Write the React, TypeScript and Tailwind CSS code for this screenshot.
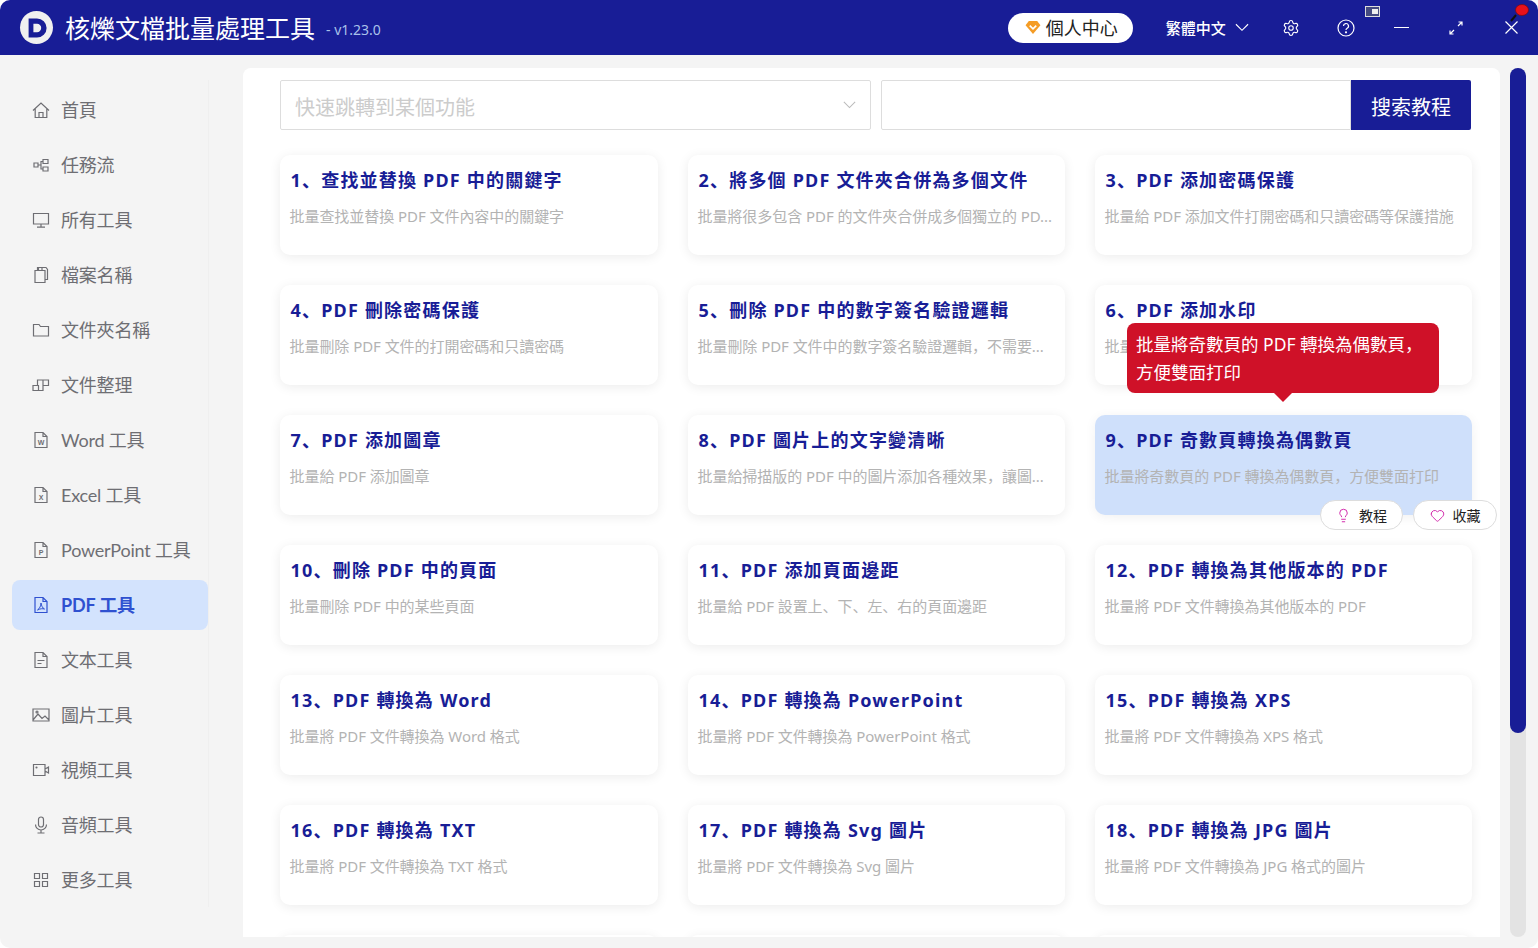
import { Heart, Lightbulb, Settings } from 'lucide-react';
import type { ReactNode } from 'react';

const FONT = 'font-["Noto_Sans","Noto_Sans_CJK_SC",sans-serif]';

function Ico({ children }: { children: ReactNode }) {
  return (
    <svg viewBox="0 0 18 18" fill="none" stroke="currentColor" strokeWidth="1.2" className="size-[18px] shrink-0">
      {children}
    </svg>
  );
}

function DocIco({ children }: { children?: ReactNode }) {
  return (
    <Ico>
      <path d="M3 1.5H11L15 5.5V16.5H3Z M11 1.5V5.5H15" />
      {children}
    </Ico>
  );
}

function Letter({ c }: { c: string }) {
  return (
    <text x="9" y="13.5" textAnchor="middle" fontSize="7" fontWeight="700" fill="currentColor" stroke="none" fontFamily="Liberation Sans">
      {c}
    </text>
  );
}

function Chevron({ className }: { className: string }) {
  return (
    <svg viewBox="0 0 15 9" fill="none" stroke="currentColor" strokeWidth="1.2" className={className}>
      <path d="M1 1l6.500 6.500L14 1" />
    </svg>
  );
}

const NAV: { label: string; icon: ReactNode; active?: boolean }[] = [
  { label: '首頁', icon: <Ico><path d="M1 9.500 9 2l8 7.500M3.200 8v8.500h11.600V8M7 16.500v-5h4v5" /></Ico> },
  { label: '任務流', icon: <Ico><path d="M2 7h4v4H2zM11 3.500h5v4h-5zM11 11h5v4h-5zM6 9h3V5.500h2M9 9v4h2" /></Ico> },
  { label: '所有工具', icon: <Ico><path d="M1.500 2.500h15v10.500h-15zM9 13v3M5 16.200h8" /></Ico> },
  { label: '檔案名稱', icon: <Ico><path d="M3 4.500h10v12H3zM5.500 4.500V1.500h8.500l1.500 2v10H13M6.500 1.500v3M10 1.500v3" /></Ico> },
  { label: '文件夾名稱', icon: <Ico><path d="M1.500 3.500H7l1.500 2h8v9.500h-15Z" /></Ico> },
  { label: '文件整理', icon: <Ico><path d="M1 9.500h5.500v5H1zM6.500 9.500v5H11V9.500M5.500 9.500V4h11v5.500H11M11 4v5.500" /></Ico> },
  { label: 'Word 工具', icon: <DocIco><Letter c="W" /></DocIco> },
  { label: 'Excel 工具', icon: <DocIco><Letter c="X" /></DocIco> },
  { label: 'PowerPoint 工具', icon: <DocIco><Letter c="P" /></DocIco> },
  { label: 'PDF 工具', active: true, icon: <DocIco><path d="M9 7c0 3-1.500 5.500-3.500 7 3-1.500 5-1.500 7-1-2-1-3-3-3.500-6Z" strokeWidth="1" /></DocIco> },
  { label: '文本工具', icon: <DocIco><path d="M5.500 9.500h7M5.500 12.500h4" /></DocIco> },
  { label: '圖片工具', icon: <Ico><path d="M1 3h16v12H1zM1 14l5-6 4 4.500 3-2.500 4 4" /><circle cx="5" cy="6" r="1" /></Ico> },
  { label: '視頻工具', icon: <Ico><path d="M1.500 3.500h11.500v11h-11.500zM13 8l3.500-2v6L13 10" /><circle cx="4.500" cy="6.500" r=".5" /></Ico> },
  { label: '音頻工具', icon: <Ico><rect x="6.500" y="1" width="5" height="10" rx="2.500" /><path d="M3.500 8.500a5.500 5.500 0 0 0 11 0M9 14v3M5.500 17h7" /></Ico> },
  { label: '更多工具', icon: <Ico><path d="M2.500 2.500h5v5h-5zM10.500 2.500h5v5h-5zM2.500 10.500h5v5h-5zM10.500 10.500h5v5h-5z" /></Ico> },
];

const CARDS: [string, string][] = [
  ['1、查找並替換 PDF 中的關鍵字', '批量查找並替換 PDF 文件內容中的關鍵字'],
  ['2、將多個 PDF 文件夾合併為多個文件', '批量將很多包含 PDF 的文件夾合併成多個獨立的 PD...'],
  ['3、PDF 添加密碼保護', '批量給 PDF 添加文件打開密碼和只讀密碼等保護措施'],
  ['4、PDF 刪除密碼保護', '批量刪除 PDF 文件的打開密碼和只讀密碼'],
  ['5、刪除 PDF 中的數字簽名驗證邏輯', '批量刪除 PDF 文件中的數字簽名驗證邏輯，不需要...'],
  ['6、PDF 添加水印', '批量給 PDF 添加文字水印'],
  ['7、PDF 添加圖章', '批量給 PDF 添加圖章'],
  ['8、PDF 圖片上的文字變清晰', '批量給掃描版的 PDF 中的圖片添加各種效果，讓圖...'],
  ['9、PDF 奇數頁轉換為偶數頁', '批量將奇數頁的 PDF 轉換為偶數頁，方便雙面打印'],
  ['10、刪除 PDF 中的頁面', '批量刪除 PDF 中的某些頁面'],
  ['11、PDF 添加頁面邊距', '批量給 PDF 設置上、下、左、右的頁面邊距'],
  ['12、PDF 轉換為其他版本的 PDF', '批量將 PDF 文件轉換為其他版本的 PDF'],
  ['13、PDF 轉換為 Word', '批量將 PDF 文件轉換為 Word 格式'],
  ['14、PDF 轉換為 PowerPoint', '批量將 PDF 文件轉換為 PowerPoint 格式'],
  ['15、PDF 轉換為 XPS', '批量將 PDF 文件轉換為 XPS 格式'],
  ['16、PDF 轉換為 TXT', '批量將 PDF 文件轉換為 TXT 格式'],
  ['17、PDF 轉換為 Svg 圖片', '批量將 PDF 文件轉換為 Svg 圖片'],
  ['18、PDF 轉換為 JPG 圖片', '批量將 PDF 文件轉換為 JPG 格式的圖片'],
  ['', ''],
  ['', ''],
  ['', ''],
];

function Header() {
  return (
    <header className="flex h-[55px] shrink-0 items-center bg-[#181d96] pl-[20px] text-white">
      <div className="flex size-[33px] items-center justify-center rounded-full bg-[#f0f0f0]">
        <svg viewBox="0 0 20 20" className="size-[24px]">
          <path d="M3 2h7a8 8 0 0 1 0 16H3Z M7 6.500v7h3a3.500 3.500 0 0 0 0-7Z" fill="#181d96" fillRule="evenodd" />
        </svg>
      </div>
      <div className="ml-[12px] mt-[2px] text-[25px] leading-none">核爍文檔批量處理工具</div>
      <div className="ml-[11px] mt-[3px] text-[14px] text-[#a9c1ea]">- v1.23.0</div>

      <div className="ml-[627px] flex h-[30px] w-[125px] items-center rounded-full bg-white pl-[17px] text-[18px] text-[#222]">
        <svg viewBox="0 0 16 14" className="h-[13px] w-[16px]">
          <path d="M3.500 0h9L16 4.500 8 14 0 4.500Z" fill="#f49c25" />
          <path d="M4.500 5 8 8.500 11.500 5" fill="none" stroke="#fff" strokeWidth="1.800" />
        </svg>
        <span className="ml-[5px] pt-[2px]">個人中心</span>
      </div>

      <div className="ml-[33px] pt-[2px] text-[15px] font-medium">繁體中文</div>
      <Chevron className="ml-[9px] h-[9px] w-[14px]" />
      <Settings className="ml-[33px] size-[18px]" strokeWidth={1.500} />
      <svg viewBox="0 0 18 18" fill="none" stroke="currentColor" strokeWidth="1.200" className="ml-[37px] size-[18px]">
        <circle cx="9" cy="9" r="8" />
        <path d="M6.500 7a2.500 2.500 0 1 1 3.700 2.200C9.400 9.700 9 10.200 9 11" />
        <circle cx="9" cy="13.300" r=".5" />
      </svg>
      <div className="relative ml-[39px] h-px w-[15px] bg-white">
        <div className="absolute left-[-29px] top-[-21px] flex h-[11px] w-[15px] items-center justify-end border border-[#ddd] bg-[#444a80] pr-px">
          <div className="h-[5px] w-[6px] bg-[#eee]" />
        </div>
      </div>
      <svg viewBox="0 0 14 14" fill="none" stroke="currentColor" strokeWidth="1.200" className="ml-[40px] size-[14px]">
        <path d="M1 13 5 9M9 5l4-4M9.500 1H13v3.500M1 9.500V13h3.500" />
      </svg>
      <div className="relative ml-[42px]">
        <svg viewBox="0 0 13 13" fill="none" stroke="currentColor" strokeWidth="1.200" className="size-[13px]">
          <path d="M.500.500l12 12M12.500.500l-12 12" />
        </svg>
        <svg viewBox="0 0 20 20" className="absolute left-[4px] top-[-18px] size-[20px]">
          <path d="M7 12 2 18" stroke="#111" strokeWidth="2" />
          <ellipse cx="13" cy="7" rx="6.500" ry="5.500" fill="#e8111b" stroke="#7a0a10" strokeWidth=".7" />
        </svg>
      </div>
    </header>
  );
}

function Sidebar() {
  return (
    <aside className="w-[243px] shrink-0 pl-[12px] pt-[25px]">
      <nav className="flex h-[827px] w-[197px] flex-col gap-[5px] border-r border-[#efefef] pt-[5px] font-['Lato','Noto_Sans_CJK_SC',sans-serif] tracking-[-0.2px]">
        {NAV.map((n) => (
          <div
            key={n.label}
            className={
              n.active
                ? 'flex h-[50px] w-[196px] shrink-0 items-center gap-[11px] rounded-[8px] bg-[#d3e3fd] pl-[20px] text-[18px] font-bold text-[#2f51d0]'
                : 'flex h-[50px] w-[196px] shrink-0 items-center gap-[11px] pl-[20px] text-[18px] text-[#6e6e73]'
            }
          >
            {n.icon}
            <span>{n.label}</span>
          </div>
        ))}
      </nav>
    </aside>
  );
}

function Pill({ icon, label, wide }: { icon: ReactNode; label: string; wide?: boolean }) {
  return (
    <div
      className={
        wide
          ? 'flex h-[30px] w-[84px] items-center justify-center gap-[8px] rounded-full border border-[#ddd] bg-white text-[14px] text-[#222]'
          : 'flex h-[30px] w-[83px] items-center justify-center gap-[8px] rounded-full border border-[#ddd] bg-white text-[14px] text-[#222]'
      }
    >
      {icon}
      <span>{label}</span>
    </div>
  );
}

function Card({ title, desc, hot }: { title: string; desc: string; hot: boolean }) {
  return (
    <div
      className={
        hot
          ? 'relative h-[100px] rounded-[10px] bg-[#cfe0fb] pl-[10.5px] pt-[12px] shadow-[0_2px_12px_rgba(0,0,0,0.06)]'
          : 'relative h-[100px] rounded-[10px] bg-white pl-[10.5px] pt-[12px] shadow-[0_2px_12px_rgba(0,0,0,0.08)]'
      }
    >
      <div className="whitespace-nowrap text-[18px] font-bold leading-[26px] tracking-[1.2px] text-[#181d96]">{title}</div>
      <div className="-ml-px mt-[13px] whitespace-nowrap text-[15px] leading-[20px] tracking-[-0.05px] text-[#b3b3b3]">{desc}</div>
      {hot && (
        <>
          <div className="absolute left-[32px] top-[-92px] z-10 h-[70px] w-[312px] whitespace-nowrap rounded-[8px] bg-[#cf1128] px-[9px] py-[7px] text-[17.5px] leading-[28px] text-white">
            批量將奇數頁的 PDF 轉換為偶數頁，
            <br />
            方便雙面打印
            <div className="absolute bottom-[-9px] left-[147px] size-0 border-x-[9px] border-t-[9px] border-x-transparent border-t-[#cf1128]" />
          </div>
          <div className="absolute right-[-25px] top-[85px] flex gap-[10px]">
            <Pill icon={<Lightbulb className="size-[15px] text-[#d020a8]" strokeWidth={1.500} />} label="教程" />
            <Pill wide icon={<Heart className="size-[15px] text-[#d020a8]" strokeWidth={1.500} />} label="收藏" />
          </div>
        </>
      )}
    </div>
  );
}

export default function App() {
  return (
    <div className={`flex h-[948px] w-[1538px] flex-col overflow-hidden rounded-[10px] bg-[#f4f4f4] ${FONT}`}>
      <Header />
      <div className="flex min-h-0 flex-1">
        <Sidebar />
        <main className="mt-[13px] mb-[11px] w-[1257px] shrink-0 overflow-hidden rounded-t-[8px] bg-white pl-[37px] pr-[28px] pt-[12px]">
          <div className="flex h-[50px] w-[1191px]">
            <div className="flex w-[591px] items-center justify-between rounded-[2px] border border-[#ddd] pl-[14px] pr-[14px] text-[20px] text-[#ccc]">
              <span className="pt-[5px]">快速跳轉到某個功能</span>
              <Chevron className="h-[8px] w-[13px] text-[#bbb]" />
            </div>
            <div className="ml-[10px] flex-1 rounded-l-[2px] border border-[#ddd]" />
            <div className="flex w-[120px] items-center justify-center rounded-r-[2px] bg-[#181d96] pt-[5px] text-[20px] text-white">搜索教程</div>
          </div>
          <div className="mt-[25px] grid grid-cols-[378px_377px_377px] gap-x-[30px] gap-y-[30px]">
            {CARDS.map(([t, d], i) => (
              <Card key={i} title={t} desc={d} hot={i === 8} />
            ))}
          </div>
        </main>
        <div className="ml-[10px] mt-[13px] mb-[11px] w-[16px] shrink-0 rounded-full bg-[#e3e3e3]">
          <div className="h-[665px] rounded-full bg-[#181d96]" />
        </div>
      </div>
    </div>
  );
}
